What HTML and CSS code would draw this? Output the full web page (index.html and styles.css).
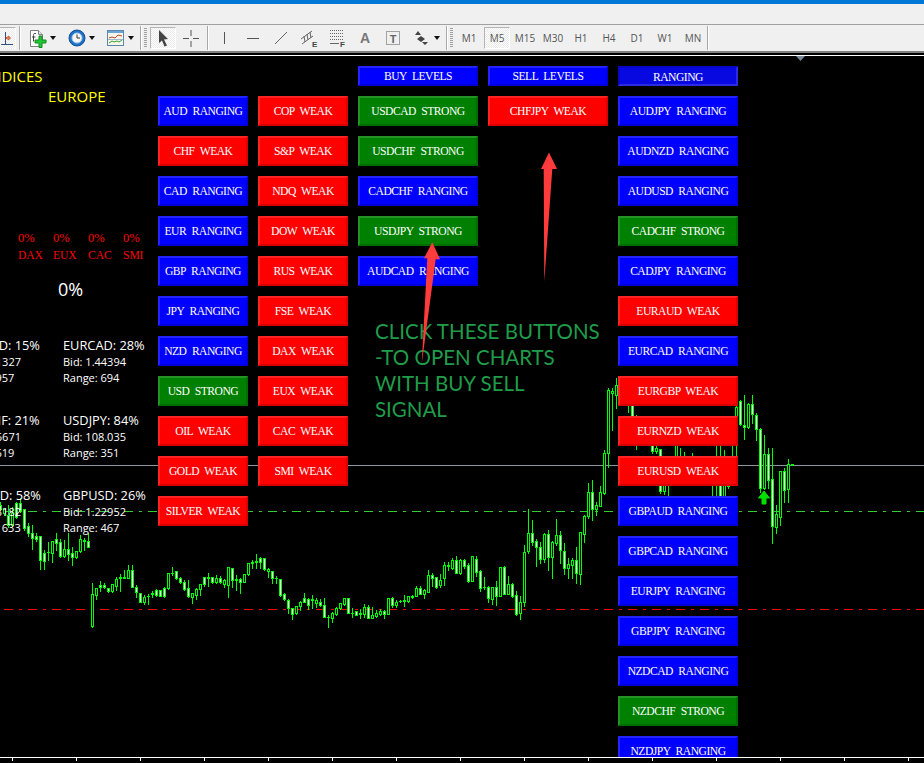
FILE: index.html
```html
<!DOCTYPE html>
<html lang="en">
<head>
  <meta charset="UTF-8" />
  <title>MetaTrader - Currency Strength Dashboard</title>
  <link rel="stylesheet" href="styles.css">
</head>
<body>
  <div class="titlebar"></div>
  <div class="menubar"></div>

  <div class="toolbar">
    <div class="tool-stub">
      <svg width="15" height="22" viewBox="0 0 15 22"><path d="M5.5 4v13M1 16.5h12" stroke="#33507a" fill="none"/><path d="M6 10h5M6 10l3-2v4z" stroke="#d2552a" fill="none"/></svg>
    </div>
    <div class="sep sep-first"></div>

    <div class="tool-drop">
      <svg width="18" height="19" viewBox="0 0 18 19"><path d="M1.5 1.5h8l4 4v6h-3v6h-9z" fill="#fff" stroke="#808080"/><path d="M9.5 1.5v4h4" fill="#e4e4e4" stroke="#808080"/><path d="M7 4.500c-2-.5-2.500.5-2.500 2v6M3 8h3.500" stroke="#444" fill="none"/><path d="M10 6.500h3v4h4v3h-4v4.500h-3v-4.500h-4v-3h4z" fill="#22c733" stroke="#138a20" transform="translate(0 .5)"/></svg>
      <span class="caret"></span>
    </div>
    <div class="tool-drop">
      <svg width="18" height="18" viewBox="0 0 18 18"><circle cx="9" cy="9" r="8" fill="#1d72c9" stroke="#15508f"/><circle cx="9" cy="9" r="5" fill="#f6f6f6" stroke="#a9c8e6"/><path d="M9 5.500V9h3" stroke="#333" fill="none"/></svg>
      <span class="caret"></span>
    </div>
    <div class="tool-drop">
      <svg width="18" height="16" viewBox="0 0 18 16"><rect x=".5" y=".5" width="16" height="15" fill="#f8f6e8" stroke="#5b86ad"/><rect x="1" y="1" width="15" height="2" fill="#6aa5d8"/><path d="M2 8l3-1 3 1 3-3 4 1" stroke="#c8402a" fill="none"/><path d="M2 13l3-2 2 1 3-1 2 1 3-2" stroke="#2fa23c" fill="none"/><path d="M1 9.500h15" stroke="#9db8cf"/></svg>
      <span class="caret"></span>
    </div>
    <div class="sep"></div>
    <div class="grip"></div>

    <div class="tool active">
      <svg width="14" height="18" viewBox="0 0 14 18"><path d="M3 1l9 9-4 .5 3 6-2.500 1-2.500-6L3 14z" fill="#444"/></svg>
    </div>
    <div class="tool">
      <svg width="16" height="17" viewBox="0 0 16 17"><path d="M8 0v6M8 11v6M0 8.500h6M10 8.500h6" stroke="#555" fill="none"/></svg>
    </div>
    <div class="sep sep-mid"></div>

    <div class="tool">
      <svg width="14" height="14" viewBox="0 0 14 14"><path d="M6.500 1v12" stroke="#555"/></svg>
    </div>
    <div class="tool">
      <svg width="14" height="14" viewBox="0 0 14 14"><path d="M1 7.500h12" stroke="#555"/></svg>
    </div>
    <div class="tool">
      <svg width="14" height="14" viewBox="0 0 14 14"><path d="M13 1L1 13" stroke="#666"/></svg>
    </div>
    <div class="tool">
      <svg width="20" height="20" viewBox="0 0 20 20"><path d="M2 11l11-8M3 16l11-8M5 8l1 6M8 6l1 6M11 4l1 6" stroke="#666" fill="none"/><text x="13" y="19" class="tool-mark">E</text></svg>
    </div>
    <div class="tool">
      <svg width="20" height="20" viewBox="0 0 20 20"><path d="M3 2.500h13M3 5.500h13M3 8.500h13M3 11.500h13" stroke="#666" stroke-dasharray="1 1" fill="none"/><path d="M3 15.500h9" stroke="#666" fill="none"/><text x="13" y="19" class="tool-mark">F</text></svg>
    </div>
    <div class="tool tool-letter">A</div>
    <div class="tool">
      <svg width="16" height="16" viewBox="0 0 16 16"><rect x="1.500" y="1.500" width="13" height="13" fill="none" stroke="#555" stroke-dasharray="1 1"/><text x="8" y="12.500" class="tool-t">T</text></svg>
    </div>
    <div class="tool">
      <svg width="16" height="16" viewBox="0 0 16 16"><path d="M2 5l3-4 3 4zM4 9l4-3 4 3-4 3zM9 12h6l-3 3z" fill="#444"/></svg>
    </div>
    <span class="caret caret-tools"></span>
    <div class="sep sep-tools"></div>
    <div class="grip"></div>

    <div class="tool tf">M1</div>
    <div class="tool tf active">M5</div>
    <div class="tool tf">M15</div>
    <div class="tool tf">M30</div>
    <div class="tool tf">H1</div>
    <div class="tool tf">H4</div>
    <div class="tool tf">D1</div>
    <div class="tool tf">W1</div>
    <div class="tool tf">MN</div>
    <div class="sep sep-end"></div>
  </div>

  <div class="chart">
    <svg class="canvas" id="canvas" viewBox="0 53 924 710" width="924" height="710" shape-rendering="crispEdges"></svg>

    <div class="region region-indices">INDICES</div>
    <div class="region region-europe">EUROPE</div>

    <div class="index-grid">
      <span class="index-pct">0%</span><span class="index-pct">0%</span><span class="index-pct">0%</span><span class="index-pct">0%</span>
      <span>DAX</span><span>EUX</span><span>CAC</span><span>SMI</span>
    </div>
    <div class="index-total">0%</div>

    <div class="pairs">
      <div class="pair"><h4>EURUSD: 15%</h4><p>Bid: 1.11327</p><p>Range: 957</p></div>
      <div class="pair"><h4>EURCAD: 28%</h4><p>Bid: 1.44394</p><p>Range: 694</p></div>
      <div class="pair"><h4>USDCHF: 21%</h4><p>Bid: 0.96671</p><p>Range: 619</p></div>
      <div class="pair"><h4>USDJPY: 84%</h4><p>Bid: 108.035</p><p>Range: 351</p></div>
      <div class="pair"><h4>EURAUD: 58%</h4><p>Bid: 1.63182</p><p>Range: 1633</p></div>
      <div class="pair"><h4>GBPUSD: 26%</h4><p>Bid: 1.22952</p><p>Range: 467</p></div>
    </div>

    <div class="panel">
      <div class="col col-narrow">
        <div class="btn blue">AUD RANGING</div>
        <div class="btn red">CHF WEAK</div>
        <div class="btn blue">CAD RANGING</div>
        <div class="btn blue">EUR RANGING</div>
        <div class="btn blue">GBP RANGING</div>
        <div class="btn blue">JPY RANGING</div>
        <div class="btn blue">NZD RANGING</div>
        <div class="btn green">USD STRONG</div>
        <div class="btn red">OIL WEAK</div>
        <div class="btn red">GOLD WEAK</div>
        <div class="btn red">SILVER WEAK</div>
      </div>
      <div class="col col-narrow">
        <div class="btn red">COP WEAK</div>
        <div class="btn red">S&amp;P WEAK</div>
        <div class="btn red">NDQ WEAK</div>
        <div class="btn red">DOW WEAK</div>
        <div class="btn red">RUS WEAK</div>
        <div class="btn red">FSE WEAK</div>
        <div class="btn red">DAX WEAK</div>
        <div class="btn red">EUX WEAK</div>
        <div class="btn red">CAC WEAK</div>
        <div class="btn red">SMI WEAK</div>
      </div>
      <div class="col col-wide">
        <div class="btn blue head">BUY LEVELS</div>
        <div class="btn green">USDCAD STRONG</div>
        <div class="btn green">USDCHF STRONG</div>
        <div class="btn blue">CADCHF RANGING</div>
        <div class="btn green">USDJPY STRONG</div>
        <div class="btn blue">AUDCAD RANGING</div>
      </div>
      <div class="col col-wide">
        <div class="btn blue head">SELL LEVELS</div>
        <div class="btn red">CHFJPY WEAK</div>
      </div>
      <div class="col col-wide">
        <div class="btn blue head pressed">RANGING</div>
        <div class="btn blue">AUDJPY RANGING</div>
        <div class="btn blue">AUDNZD RANGING</div>
        <div class="btn blue">AUDUSD RANGING</div>
        <div class="btn green">CADCHF STRONG</div>
        <div class="btn blue">CADJPY RANGING</div>
        <div class="btn red">EURAUD WEAK</div>
        <div class="btn blue">EURCAD RANGING</div>
        <div class="btn red">EURGBP WEAK</div>
        <div class="btn red">EURNZD WEAK</div>
        <div class="btn red">EURUSD WEAK</div>
        <div class="btn blue">GBPAUD RANGING</div>
        <div class="btn blue">GBPCAD RANGING</div>
        <div class="btn blue">EURJPY RANGING</div>
        <div class="btn blue">GBPJPY RANGING</div>
        <div class="btn blue">NZDCAD RANGING</div>
        <div class="btn green">NZDCHF STRONG</div>
        <div class="btn blue">NZDJPY RANGING</div>
      </div>
    </div>

    <div class="note">CLICK THESE BUTTONS<br>-TO OPEN CHARTS<br>WITH BUY SELL<br>SIGNAL</div>

    <!-- red call-outs drawn over the screenshot -->
    <svg class="canvas" viewBox="0 53 924 710" width="924" height="710">
      <polygon class="callout" points="549,152.500 557,169 552.300,169 544.300,281.700 543.700,169 541,169"/>
      <polygon class="callout" points="432.300,242.300 440,259.300 435.700,259.300 421.700,364 427.300,258.300 424,258.300"/>
    </svg>
  </div>

  <script src="chart.js"></script>
</body>
</html>
```

FILE: styles.css
```css
* {
  margin: 0;
  padding: 0;
  box-sizing: border-box;
}

html, body {
  width: 924px;
  height: 763px;
  overflow: hidden;
  background: #000;
  font-family: 'Open Sans', sans-serif;
}

body {
  display: flex;
  flex-direction: column;
}

.titlebar {
  height: 4px;
  background: #0078d7;
}

.menubar {
  height: 20px;
  background: #f0f0f0;
}

/* Toolbar */
.toolbar {
  display: flex;
  align-items: center;
  height: 29px;
  background: #f0f0f0;
  border-top: 1px solid #a0a0a0;
  border-bottom: 2px solid #808080;
}

.tool-stub {
  display: flex;
  width: 16px;
  height: 22px;
  background: repeating-conic-gradient(#e9e9e9 0 25%, #fff 0 50%) 0 0 / 2px 2px;
  border-right: 1px solid #fff;
  border-top: 1px solid #b4b4b4;
}

.sep {
  width: 2px;
  height: 24px;
  background: #a8a8a8;
  border-right: 1px solid #fff;
}

.sep-first { margin: 0 2px 0 3px; }
.sep-mid { margin: 0 1px 0 3px; }
.sep-tools { margin-left: 6px; }
.sep-end { margin-left: 1px; }

.grip {
  width: 3px;
  height: 20px;
  margin: 0 1px 0 2px;
  background: repeating-linear-gradient(#a0a0a0 0 1px, transparent 1px 2px);
}

.tool-drop {
  display: flex;
  align-items: center;
  width: 39px;
  padding-left: 6px;
}

.caret {
  width: 0;
  height: 0;
  margin-left: 3px;
  border-left: 3.500px solid transparent;
  border-right: 3.500px solid transparent;
  border-top: 4px solid #111;
}

.caret-tools {
  margin-left: 0;
}

.tool {
  display: flex;
  align-items: center;
  justify-content: center;
  width: 26px;
  height: 22px;
  margin-left: 2px;
  border: 1px solid transparent;
}

.tool.active {
  background: repeating-conic-gradient(#e9e9e9 0 25%, #fff 0 50%) 0 0 / 2px 2px;
  border-color: #b4b4b4 #fff #fff #b4b4b4;
}

.tool-letter {
  font-family: 'Liberation Sans', sans-serif;
  font-size: 14px;
  font-weight: bold;
  color: #777;
}

.tool-mark {
  font-family: 'Liberation Sans', sans-serif;
  font-size: 8px;
  font-weight: bold;
  fill: #444;
}

.tool-t {
  font-family: 'Liberation Sans', sans-serif;
  font-size: 11px;
  font-weight: bold;
  fill: #666;
  text-anchor: middle;
}

.tf {
  font-size: 10px;
  color: #555;
}

/* Chart */
.chart {
  position: relative;
  flex: 1;
  overflow: hidden;
  background: #000;
}

.canvas {
  position: absolute;
  top: 0;
  left: 0;
  pointer-events: none;
}

.callout {
  fill: #ff3b3b;
}

.region {
  position: absolute;
  font-size: 15px;
  line-height: 20px;
  color: #ffff00;
}

.region-indices {
  top: 13px;
  left: -14px;
}

.region-europe {
  top: 33px;
  left: 48px;
}

.index-grid {
  position: absolute;
  top: 178px;
  left: 18px;
  display: grid;
  grid-template-columns: repeat(4, 35px);
  row-gap: 3px;
  font-family: 'Liberation Serif', serif;
  font-size: 11.500px;
  line-height: 14px;
  color: #ff0000;
}

.index-pct {
  font-size: 12.500px;
}

.index-total {
  position: absolute;
  top: 224px;
  left: 58px;
  font-size: 18px;
  line-height: 24px;
  color: #fff;
}

.pairs {
  position: absolute;
  top: 283px;
  left: -42px;
  display: grid;
  grid-template-columns: repeat(2, 105px);
  grid-auto-rows: 75px;
  color: #fff;
}

.pair h4 {
  font-size: 12.800px;
  font-weight: normal;
  line-height: 18px;
  white-space: nowrap;
}

.pair p {
  font-size: 11px;
  line-height: 16px;
  white-space: nowrap;
}

/* Button panel */
.panel {
  position: absolute;
  top: 13px;
  left: 158px;
  display: flex;
  gap: 10px;
  height: 691px;
  overflow: hidden;
}

.col {
  display: flex;
  flex-direction: column;
  gap: 10px;
}

.col-narrow {
  width: 90px;
  padding-top: 30px;
}

.col-wide {
  width: 120px;
}

.btn {
  flex: none;
  height: 30px;
  font-family: 'Liberation Serif', serif;
  font-size: 11.600px;
  letter-spacing: -0.5px;
  word-spacing: 3px;
  line-height: 28px;
  text-align: center;
  white-space: pre;
  color: #fff;
  border-style: solid;
  border-width: 2px;
  border-color: rgba(255, 255, 255, 0.14) rgba(0, 0, 0, 0.14) rgba(0, 0, 0, 0.14) rgba(255, 255, 255, 0.14);
}

.head {
  height: 20px;
  line-height: 18px;
}

.blue { background: #0000ff; }
.red { background: #ff0000; }
.green { background: #008000; }

.pressed {
  background: #0808e0;
  line-height: 20px;
  border-color: rgba(0, 0, 0, 0.1) rgba(255, 255, 255, 0.14) rgba(255, 255, 255, 0.14) rgba(0, 0, 0, 0.1);
}

.note {
  position: absolute;
  top: 265px;
  left: 375px;
  font-family: 'Lato', sans-serif;
  font-size: 20.500px;
  line-height: 26px;
  color: #1f9d4a;
}
```

FILE: chart.js
```js
const svg = document.getElementById('canvas');
const NS = 'http://www.w3.org/2000/svg';

// one candle every 4px from x=0: [high, top, bottom, low, white body]
// null = nothing to see, the button column sits on top of it
const candles = [
  [502,505,509,510,1],[508,508,513,515,0],[505,515,525,527,1],[507,513,525,526,0],[502,503,517,518,1],
  [498,503,510,512,1],[509,509,528,530,1],[523,526,533,536,1],[525,533,538,549,1],[533,536,539,541,1],
  [536,536,560,569,1],[550,553,561,569,1],[542,552,552,560,0],[541,541,553,562,0],[533,539,543,550,1],
  [539,542,556,557,1],[540,549,556,557,0],[533,549,554,560,1],[547,553,557,565,1],[551,551,557,558,0],
  [535,539,551,552,0],[538,540,541,550,0],[533,541,547,547,1],
  [583,594,626,627,0],[588,588,595,599,0],[581,585,587,591,1],[583,585,587,588,1],[588,588,591,592,1],
  [584,584,591,592,0],[577,579,586,590,0],[574,577,578,591,0],[570,577,578,578,0],[565,570,578,578,0],
  [565,570,587,587,1],[585,587,592,597,1],[593,593,602,602,1],[595,597,602,604,0],[594,596,596,604,0],
  [591,593,594,597,0],[589,590,595,596,1],[590,590,596,596,1],[587,588,596,597,1],[573,573,588,589,0],
  [567,573,573,575,0],[571,571,578,579,1],[577,578,582,583,1],[580,582,589,590,1],[580,588,596,597,1],
  [593,593,597,603,0],[588,589,595,599,0],[584,584,589,595,0],[577,577,584,586,1],[573,577,578,586,0],
  [577,577,582,583,1],[575,578,582,583,0],[576,578,582,583,1],[579,580,584,587,0],[567,567,585,597,0],
  [568,568,580,587,1],[575,579,580,590,0],[578,579,582,593,1],[574,574,582,582,0],[563,563,574,575,0],
  [560,562,563,568,0],[554,561,562,568,0],[557,558,562,568,1],[558,558,569,570,1],[568,569,571,577,0],
  [571,571,578,583,1],[576,578,578,583,0],[579,579,595,596,1],[593,594,599,600,1],[599,600,608,613,1],
  [608,608,614,619,1],[606,606,613,614,0],[601,602,606,610,0],[593,598,602,602,1],[598,599,605,609,1],
  [595,599,600,608,0],[598,600,603,607,0],[599,602,605,606,1],[598,605,617,617,1],[615,617,617,627,0],
  [612,613,618,622,0],[607,608,614,615,0],[603,603,608,609,0],[598,598,604,605,0],[598,598,613,613,1],
  [608,613,613,617,0],[611,611,615,615,1],[609,613,614,618,0],[604,607,614,617,0],[605,607,618,618,1],
  [607,615,618,618,0],[610,613,616,617,0],[609,611,614,615,0],[610,611,614,618,1],[598,598,614,614,0],
  [597,598,605,607,1],[600,602,605,607,0],[600,601,601,602,0],[595,600,601,606,0],[596,596,601,602,0],
  [595,596,597,598,0],[586,588,596,596,0],[586,588,594,594,1],[589,590,594,598,0],[570,575,592,592,0],
  [573,575,578,586,1],[577,577,587,588,1],[574,580,585,587,0],[562,565,578,585,0],[562,565,566,570,0],
  [558,560,568,569,0],[556,560,573,573,1],[559,560,573,574,0],[559,560,566,568,1],[563,565,581,582,1],
  [556,556,581,581,0],[556,559,572,576,1],[570,571,588,591,1],[577,587,587,589,0],[586,587,598,602,1],
  [587,587,599,604,0],[581,587,596,605,1],[567,567,596,596,0],[566,567,594,594,1],[576,584,594,594,0],
  [583,584,596,597,1],[591,595,614,615,1],[596,602,613,619,0],[545,552,602,606,0],[509,533,551,553,0],
  [520,533,542,545,1],[539,541,547,566,1],[542,547,559,563,1],[533,534,559,562,0],[530,534,557,570,1],
  [541,542,557,578,0],[519,535,543,545,0],[531,535,550,563,1],[543,551,568,574,1],[558,564,568,578,0],
  [558,560,565,578,0],[547,560,573,583,1],[532,532,574,584,0],[515,516,534,542,0],
  [483,492,516,518,0],[480,492,509,520,1],[502,505,509,515,0],[486,492,506,506,0],[450,453,493,494,0],
  [388,390,453,467,0],[388,391,393,430,0],[378,385,395,408,0],
  null,null,
  [400,402,404,412,0],[395,400,420,425,1],[415,417,440,449,0],
  null,null,null,
  [435,440,451,453,1],[440,448,451,453,0],[449,449,491,493,1],[470,475,491,494,0],[470,478,485,496,0],
  null,
  [430,440,470,475,0],[448,470,472,476,0],[452,470,472,475,0],
  null,
  [453,470,472,478,0],
  null,null,null,null,
  [460,470,480,497,0],[440,460,470,497,0],[440,460,496,498,1],[450,462,496,498,0],[470,480,486,488,0],
  [420,430,440,470,0],[405,407,430,470,0],
  [400,401,424,425,1],[395,425,427,439,1],[403,404,427,428,0],[395,404,414,423,1],[413,415,429,440,1],
  [428,429,488,492,1],[435,454,488,489,0],[448,454,480,488,1],[448,479,526,543,1],[505,514,527,533,0],
  [471,471,517,525,0],[468,471,490,502,1],[459,464,489,502,0],[464,464,465,465,0]
];

function add(tag, attrs) {
  const el = document.createElementNS(NS, tag);
  for (const key in attrs) el.setAttribute(key, attrs[key]);
  svg.appendChild(el);
  return el;
}

function rect(x, y, w, h, fill) {
  add('rect', { x: x, y: y, width: w, height: h, fill: fill });
}

function level(y, color) {
  add('line', { x1: 0, y1: y + 0.5, x2: 924, y2: y + 0.5, stroke: color, 'stroke-dasharray': '9 6 3 6', 'stroke-dashoffset': -4 });
}

// top and bottom frame
rect(0, 55, 924, 1, '#fff');
rect(0, 757, 924, 1, '#fff');
for (let x = 12; x < 924; x += 64) rect(x, 758, 1, 3, '#fff');
add('polygon', { points: '796,56 805,56 800.500,61', fill: '#778899', 'shape-rendering': 'auto' });

// price levels
rect(0, 465, 924, 1, '#8f95a0');
level(511, '#32cd32');
level(609, '#ff0000');

candles.forEach((c, i) => {
  if (!c) return;
  const x = i * 4;
  rect(x, c[0], 1, c[3] - c[0] + 1, '#00ff00');
  rect(x - 1, c[1], 3, c[2] - c[1] + 1, '#00ff00');
  if (c[2] - c[1] > 1) rect(x, c[1] + 1, 1, c[2] - c[1] - 1, c[4] ? '#fff' : '#000');
});

// buy signal
add('polygon', { points: '764,491 769.500,498 766,498 766,504 762,504 762,498 758.500,498', fill: '#00e000', stroke: '#00e000', 'shape-rendering': 'auto' });
```
